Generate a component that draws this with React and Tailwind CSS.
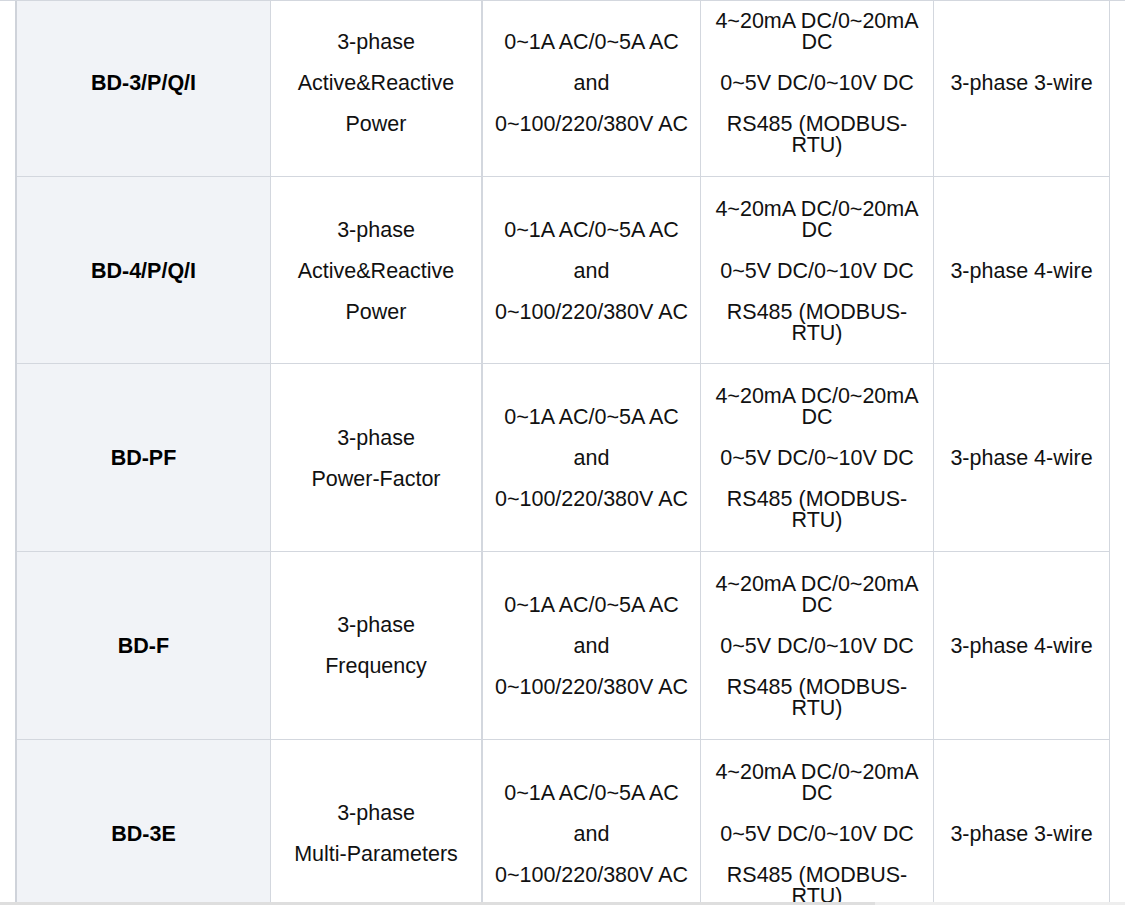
const rows = [
  {
    model: "BD-3/P/Q/I",
    func: ["3-phase", "Active&Reactive", "Power"],
    wiring: "3-phase 3-wire",
  },
  {
    model: "BD-4/P/Q/I",
    func: ["3-phase", "Active&Reactive", "Power"],
    wiring: "3-phase 4-wire",
  },
  {
    model: "BD-PF",
    func: ["3-phase", "Power-Factor"],
    wiring: "3-phase 4-wire",
  },
  {
    model: "BD-F",
    func: ["3-phase", "Frequency"],
    wiring: "3-phase 4-wire",
  },
  {
    model: "BD-3E",
    func: ["3-phase", "Multi-Parameters"],
    wiring: "3-phase 3-wire",
  },
];

const inputs = ["0~1A AC/0~5A AC", "and", "0~100/220/380V AC"];
const outputs = ["4~20mA DC/0~20mA DC", "0~5V DC/0~10V DC", "RS485 (MODBUS-RTU)"];

const Lines = ({ items }) => (
  <div className="flex flex-col gap-[20px]">
    {items.map((t) => (
      <p key={t}>{t}</p>
    ))}
  </div>
);

const cell =
  "flex items-center justify-center text-center px-[10px] pt-[22px] pb-[19.67px] border-b border-[#d3d7de]";

export default function App() {
  return (
    <div className="relative w-[1125px] h-[905px] overflow-hidden bg-white border-t border-[#d3d7de] font-['Liberation_Sans',Arial,sans-serif] text-[21.5px] leading-[21px] text-[#111]">
      <div className="-mt-[12px] ml-[15px] w-[1095px] border-l-2 border-[#cfd3da] grid grid-cols-[254px_212px_218px_233px_176px]">
        {rows.map((r) => (
          <div key={r.model} className="contents">
            <div className={`${cell} bg-[#f1f3f7] border-r border-r-[#d3d7de] font-bold text-black`}>
              {r.model}
            </div>
            <div className={`${cell} border-r-2 border-r-[#d3d7de]`}>
              <Lines items={r.func} />
            </div>
            <div className={`${cell} border-r border-r-[#d3d7de]`}>
              <Lines items={inputs} />
            </div>
            <div className={`${cell} border-r border-r-[#d3d7de]`}>
              <Lines items={outputs} />
            </div>
            <div className={`${cell} border-r border-r-[#d3d7de]`}>{r.wiring}</div>
          </div>
        ))}
      </div>

      {/* horizontal scrollbar */}
      <div className="absolute left-0 bottom-0 w-full h-[3px] bg-[#eeeeee]">
        <div className="h-full w-[875px] bg-[#dedede]" />
      </div>
    </div>
  );
}
